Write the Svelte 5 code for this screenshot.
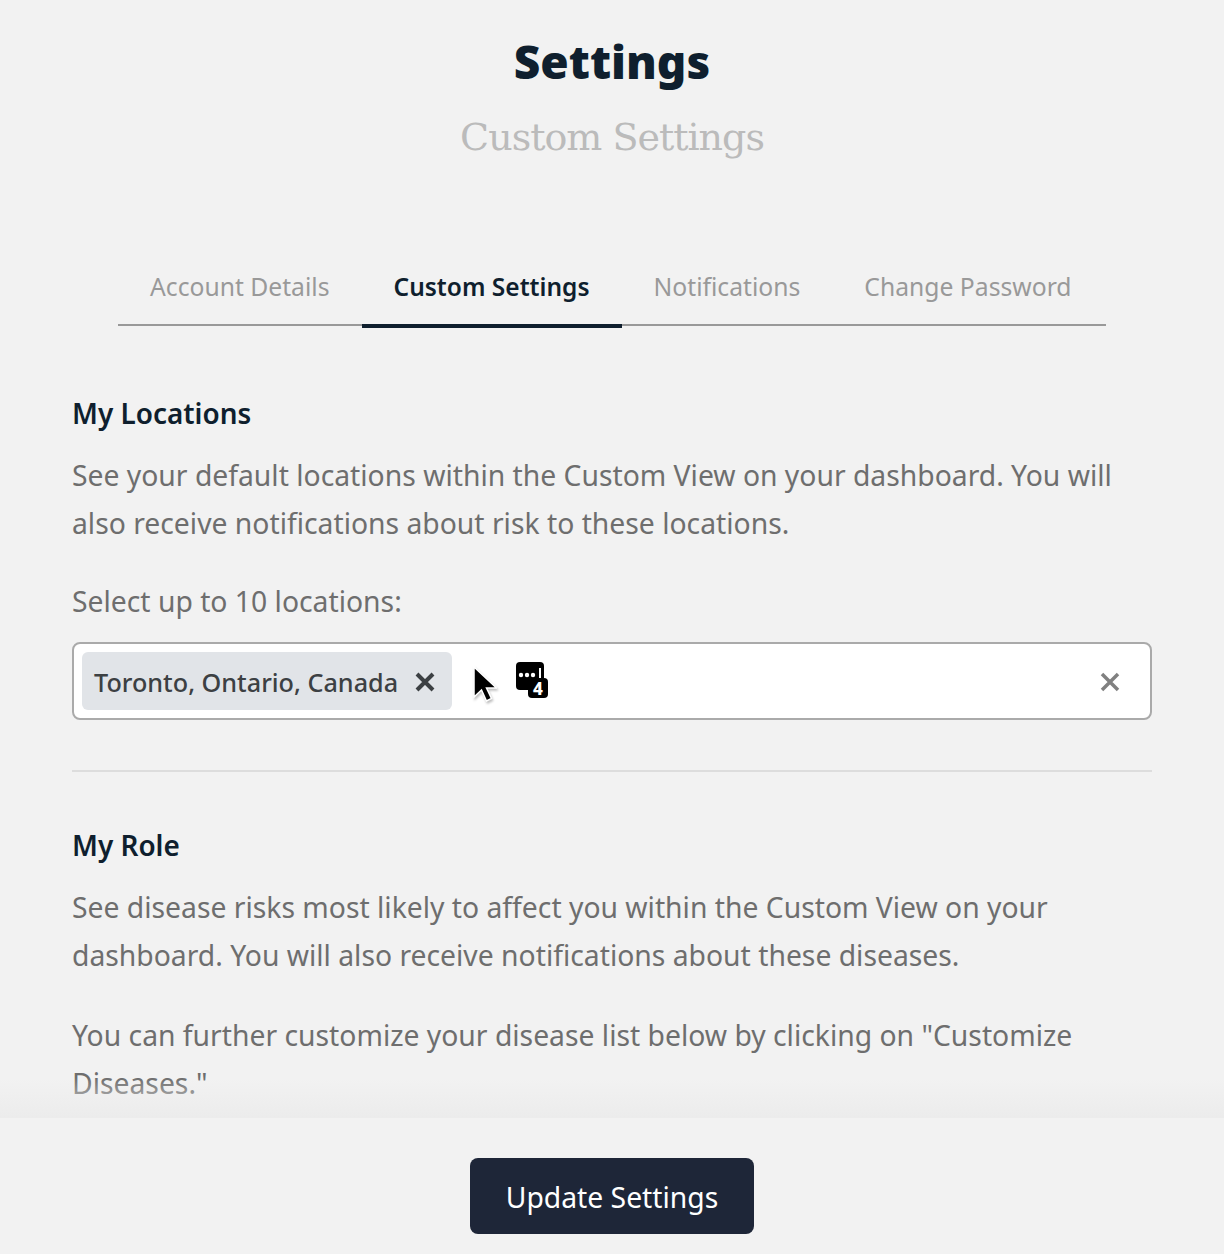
<script lang="ts">
	const tabs = [
		{ label: 'Account Details', active: false },
		{ label: 'Custom Settings', active: true },
		{ label: 'Notifications', active: false },
		{ label: 'Change Password', active: false },
	];
</script>

<div class="page">
	<main class="content">
		<header class="head">
			<h1>Settings</h1>
			<p class="subtitle">Custom Settings</p>
		</header>

		<nav class="tabs">
			{#each tabs as tab}
				<span class="tab" class:active={tab.active}>{tab.label}</span>
			{/each}
		</nav>

		<section class="block first">
			<h2>My Locations</h2>
			<p>See your default locations within the Custom View on your dashboard. You will also receive notifications about risk to these locations.</p>
			<p class="label">Select up to 10 locations:</p>
			<div class="select">
				<span class="chip">
					<span class="chip-text">Toronto, Ontario, Canada</span>
					<svg class="chip-x" viewBox="0 0 20 20" width="20" height="20"><path d="M2 2 18 18M18 2 2 18" /></svg>
				</span>
				<svg class="cursor" viewBox="0 0 26 40" width="26" height="40">
					<path d="M3 2v30l7.500-7 5 11 5-2.500-5-10.500h10z" fill="#000" stroke="#fff" stroke-width="1.500" />
				</svg>
				<svg class="busy" viewBox="0 0 34 44" width="34" height="44">
					<rect x="1" y="0" width="28" height="28" rx="4" fill="#000" />
					<circle cx="6" cy="13" r="2.200" fill="#fff" />
					<circle cx="12" cy="13" r="2.200" fill="#fff" />
					<circle cx="18" cy="13" r="2.200" fill="#fff" />
					<rect x="24" y="6" width="2" height="10" fill="#fff" />
					<rect x="13" y="16" width="20" height="20" rx="4" fill="#000" />
					<text x="23" y="32.500" class="busy-num">4</text>
				</svg>
				<svg class="clear" viewBox="0 0 20 20" width="20" height="20"><path d="M2 2 18 18M18 2 2 18" /></svg>
			</div>
		</section>

		<hr />

		<section class="block">
			<h2>My Role</h2>
			<p>See disease risks most likely to affect you within the Custom View on your dashboard. You will also receive notifications about these diseases.</p>
			<p class="gap">You can further customize your disease list below by clicking on "Customize Diseases."</p>
		</section>
	</main>

	<footer class="bar">
		<button type="button">Update Settings</button>
	</footer>
</div>

<style>
	:global(body) {
		background: #f2f2f2;
		font-family: 'Noto Sans', sans-serif;
	}

	.page {
		height: 1254px;
		display: flex;
		flex-direction: column;
		overflow: hidden;
	}

	.content {
		flex: 1;
		min-height: 0;
		overflow: hidden;
		padding: 0 72px;
		position: relative;
	}

	.content::after {
		content: '';
		position: absolute;
		left: 0;
		right: 0;
		bottom: 0;
		height: 40px;
		background: linear-gradient(rgba(235, 235, 235, 0), rgba(235, 235, 235, 0.9));
	}

	.head {
		text-align: center;
		padding-top: 31px;
	}

	h1 {
		margin: 0;
		font-size: 46px;
		line-height: 60px;
		font-weight: 900;
		color: #0f1f2e;
	}

	.subtitle {
		margin: 19px 0 0;
		font-family: 'DejaVu Serif', serif;
		font-size: 38px;
		letter-spacing: -1px;
		line-height: 54px;
		color: #bbb;
	}

	.tabs {
		display: flex;
		justify-content: flex-start;
		width: 988px;
		margin: 88px auto 0;
		border-bottom: 2px solid #999;
	}

	.tab {
		padding: 0 32px;
		height: 74px;
		line-height: 70px;
		font-size: 24.700px;
		color: #999;
		margin-bottom: -2px;
		box-sizing: border-box;
		white-space: nowrap;
	}

	.tab.active {
		color: #0f1f2e;
		font-size: 24.500px;
		font-weight: 600;
		height: 76px;
		margin-bottom: -4px;
		border-bottom: 4px solid #0f1f2e;
	}

	.block {
		margin-top: 51px;
	}

	.block.first {
		margin-top: 65px;
	}

	h2 {
		margin: 0 0 16px;
		font-size: 27.900px;
		line-height: 44px;
		font-weight: 600;
		color: #0f1f2e;
	}

	p {
		margin: 0;
		font-size: 28.300px;
		line-height: 48px;
		color: #6e6e6e;
	}

	.label {
		margin-top: 30px;
	}

	.gap {
		margin-top: 32px;
	}

	.select {
		margin-top: 17px;
		height: 78px;
		box-sizing: border-box;
		background: #fff;
		border: 2px solid #aaa;
		border-radius: 8px;
		padding: 8px;
		display: flex;
		align-items: center;
		position: relative;
	}

	.chip {
		height: 58px;
		width: 370px;
		box-sizing: border-box;
		background: #e1e4e8;
		border-radius: 6px;
		padding: 0 17px 0 12px;
		display: flex;
		align-items: center;
		justify-content: space-between;
		font-size: 25.200px;
		font-weight: 500;
		color: #3c4043;
		white-space: nowrap;
	}

	.chip-text {
		padding-top: 2px;
	}

	.chip-x {
		margin-top: 2px;
	}

	.chip-x path {
		stroke: #3c4043;
		stroke-width: 4;
		fill: none;
	}

	.cursor {
		margin-left: 19px;
		margin-top: 8px;
		filter: drop-shadow(1px 2px 1px rgba(0, 0, 0, 0.25));
	}

	.busy {
		margin-left: 18px;
		margin-top: 6px;
	}

	.busy-num {
		fill: #fff;
		font-size: 17px;
		font-weight: 800;
		text-anchor: middle;
	}

	.clear {
		position: absolute;
		right: 30px;
		top: 28px;
	}

	.clear path {
		stroke: #808080;
		stroke-width: 3.500;
		fill: none;
	}

	hr {
		margin: 50px 0 0;
		border: 0;
		border-top: 2px solid #ddd;
	}

	.bar {
		flex: 0 0 136px;
		display: flex;
		justify-content: center;
		align-items: flex-start;
		padding-top: 40px;
		box-sizing: border-box;
	}

	button {
		width: 284px;
		height: 76px;
		padding: 2px 0 0;
		background: #1e2638;
		color: #fff;
		border: 0;
		border-radius: 8px;
		font-family: inherit;
		font-size: 28.300px;
	}
</style>
